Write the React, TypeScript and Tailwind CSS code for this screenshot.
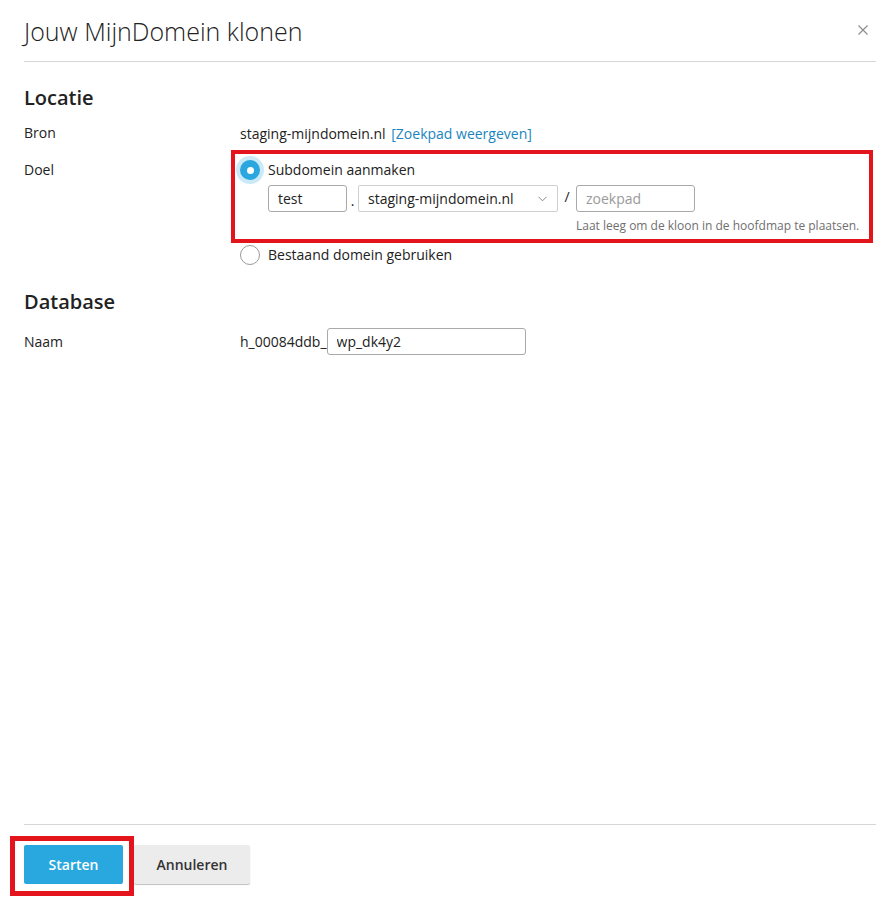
import React from "react";

function Radio({ checked }: { checked?: boolean }) {
  if (checked) {
    return (
      <span className="flex h-[20px] w-[20px] shrink-0 items-center justify-center rounded-full bg-[#2ba6de] ring-4 ring-[#cbe9f7]">
        <span className="h-[7px] w-[7px] rounded-full bg-white" />
      </span>
    );
  }
  return <span className="h-[20px] w-[20px] shrink-0 rounded-full border border-[#9a9a9a] bg-white" />;
}

function Row({ label, children }: { label: string; children: React.ReactNode }) {
  return (
    <div className="flex">
      <div className="w-[216px] shrink-0 leading-5">{label}</div>
      <div className="flex-1">{children}</div>
    </div>
  );
}

export default function App() {
  return (
    <div
      className="relative flex h-[906px] w-[886px] flex-col bg-white text-[14px] text-[#222]"
      style={{ fontFamily: '"Open Sans", "Noto Sans", sans-serif' }}
    >
      {/* header */}
      <div className="ml-6 mr-[10px] flex h-[62px] items-center justify-between border-b border-[#d6d6d6]">
        <h1 className="text-[25px] font-light leading-8 text-[#222]">Jouw MijnDomein klonen</h1>
        <svg width="10" height="10" viewBox="0 0 10 10" className="mr-[8px] mb-[2px]">
          <path d="M0.5 0.5 L9.5 9.5 M9.5 0.5 L0.5 9.5" stroke="#8a8a8a" strokeWidth="1.1" />
        </svg>
      </div>

      {/* body */}
      <div className="flex-1 px-6 pt-[22px]">
        <h2 className="text-[20px] font-semibold leading-7">Locatie</h2>

        <div className="mt-[11px]">
          <Row label="Bron">
            <span className="leading-5">staging-mijndomein.nl </span>
            <a className="ml-[2px] leading-5 text-[#1c85bd]">[Zoekpad weergeven]</a>
          </Row>
        </div>

        <div className="mt-[16px]">
          <Row label="Doel">
            <div className="flex items-center gap-2">
              <Radio checked />
              <span className="leading-5">Subdomein aanmaken</span>
            </div>
            <div className="mt-[5px] flex items-start pl-7">
              <input
                readOnly
                value="test"
                className="h-[27px] w-[79px] rounded-[3px] border border-[#a9a9a9] px-[9px] text-[14px] text-[#222] outline-none"
              />
              <span className="w-[11px] pt-[6px] text-center leading-5">.</span>
              <div className="flex h-[27px] w-[200px] items-center justify-between rounded-[2px] border border-[#cfcfcf] pl-[9px] pr-[10px]">
                <span>staging-mijndomein.nl</span>
                <svg width="9" height="6" viewBox="0 0 9 6">
                  <path d="M0.5 0.8 L4.5 4.8 L8.5 0.8" fill="none" stroke="#888" strokeWidth="1" />
                </svg>
              </div>
              <span className="w-[18px] pt-[2px] text-center leading-5">/</span>
              <div className="flex flex-col">
                <input
                  readOnly
                  placeholder="zoekpad"
                  className="h-[27px] w-[119px] rounded-[3px] border border-[#a9a9a9] px-[9px] text-[14px] outline-none placeholder:text-[#9a9a9a]"
                />
                <span className="mt-[6px] whitespace-nowrap text-[12px] leading-[16px] text-[#6f6f6f]">
                  Laat leeg om de kloon in de hoofdmap te plaatsen.
                </span>
              </div>
            </div>
            <div className="mt-[11px] flex items-center gap-2">
              <Radio />
              <span className="leading-5">Bestaand domein gebruiken</span>
            </div>
          </Row>
        </div>

        <h2 className="mt-[23px] text-[20px] font-semibold leading-7">Database</h2>

        <div className="mt-[12px] flex items-center">
          <div className="w-[216px] shrink-0 leading-5">Naam</div>
          <span className="leading-5">h_00084ddb_</span>
          <input
            readOnly
            value="wp_dk4y2"
            className="h-[27px] w-[199px] rounded-[3px] border border-[#a9a9a9] px-[9px] text-[14px] text-[#222] outline-none"
          />
        </div>
      </div>

      {/* footer */}
      <div className="ml-6 mr-[10px] flex gap-[11px] border-t border-[#d6d6d6] pb-[22px] pt-[20px]">
        <button className="h-[39px] w-[99px] rounded-[2px] bg-[#29a8e0] text-[14px] font-semibold text-white">
          Starten
        </button>
        <button className="h-[39px] w-[116px] rounded-[2px] bg-[#ececec] text-[14px] font-semibold text-[#333] shadow-[0_1px_1px_rgba(0,0,0,0.25)]">
          Annuleren
        </button>
      </div>

      {/* annotation boxes */}
      <div className="pointer-events-none absolute left-[231px] top-[150px] h-[93px] w-[642px] border-4 border-[#e3141c]" />
      <div className="pointer-events-none absolute left-[10px] top-[836px] h-[60px] w-[124px] border-[5px] border-[#e3141c]" />
    </div>
  );
}
